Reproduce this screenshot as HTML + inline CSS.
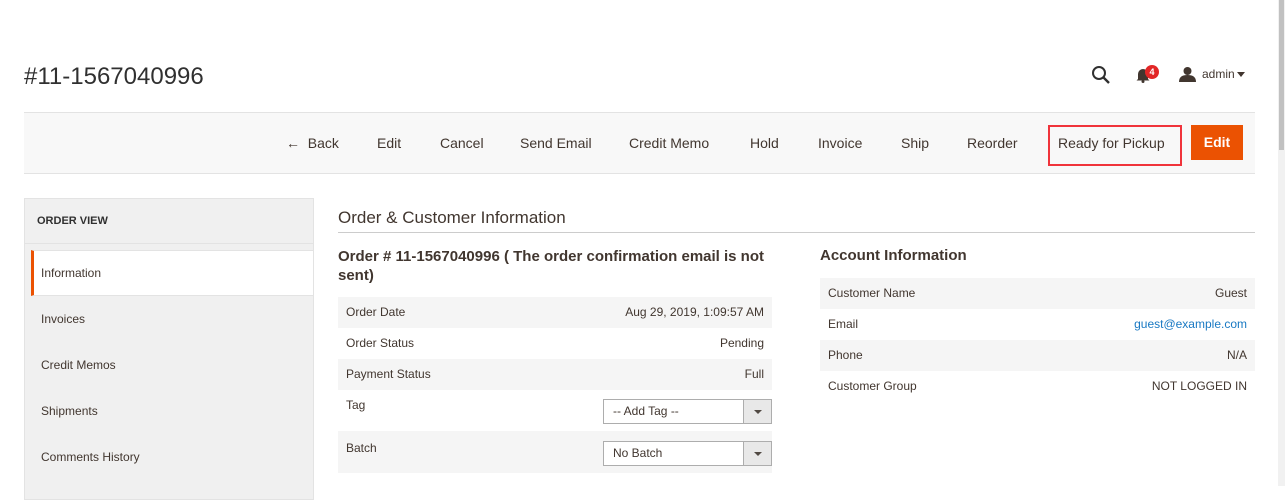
<!DOCTYPE html>
<html><head><style>
body{margin:0;width:1285px;height:486px;overflow:hidden;background:#fff;font-family:"Liberation Sans",sans-serif;color:#41362f;position:relative}
.a{position:absolute}
.tb span{position:absolute;top:135px;font-size:14px;color:#41362f}
.side div{position:absolute;left:25px;width:288px;height:46px;font-size:12px;line-height:46px;box-sizing:border-box;padding-left:16px}
.row{position:absolute;height:31px;font-size:12px;line-height:31px;color:#41362f}
.row b{font-weight:normal;position:absolute;right:8px}
.row i{font-style:normal;position:absolute;left:8px}
.g{background:#f5f5f5}
.sel{position:absolute;left:603px;width:167px;height:23px;border:1px solid #adadad;background:#fff;font-size:12px;line-height:23px}
.sel span{padding-left:9px}
.sel em{position:absolute;right:0;top:0;width:27px;height:23px;background:#e8e8e8;border-left:1px solid #adadad}
.sel em:after{content:"";position:absolute;left:10px;top:10px;border:4px solid transparent;border-top:4px solid #514943;border-bottom:0}
</style></head><body>
<div class="a" style="left:24px;top:63px;font-size:24px;color:#303030">#11-1567040996</div>
<svg class="a" style="left:1091px;top:65px" width="20" height="20" viewBox="0 0 20 20"><circle cx="8" cy="8" r="6" fill="none" stroke="#303030" stroke-width="2"/><path d="M12.5 12.5L18 18" stroke="#303030" stroke-width="2.4"/></svg>
<svg class="a" style="left:1136px;top:67px" width="14" height="16" viewBox="0 0 14 16"><path d="M2 12V7a5 5 0 0110 0v5l1.5 1.5h-13z" fill="#41362f"/><circle cx="7" cy="14.5" r="1.5" fill="#41362f"/></svg>
<div class="a" style="left:1145px;top:65px;width:14px;height:14px;border-radius:7px;background:#e22626;color:#fff;font-size:9px;font-weight:bold;text-align:center;line-height:14px">4</div>
<svg class="a" style="left:1179px;top:66px" width="17" height="16" viewBox="0 0 17 16"><circle cx="8.5" cy="5" r="4" fill="#41362f"/><path d="M0 16c0-5 3-7 8.5-7s8.5 2 8.5 7z" fill="#41362f"/></svg>
<div class="a" style="left:1202px;top:67px;font-size:12px;color:#41362f">admin</div>
<div class="a" style="left:1237px;top:72px;border:4px solid transparent;border-top:5px solid #41362f"></div>
<div class="a" style="left:1278px;top:0;width:7px;height:486px;background:#f1f1f1"></div>
<div class="a" style="left:1279px;top:0;width:5px;height:150px;background:#c1c1c1"></div>

<div class="a" style="left:24px;top:112px;width:1231px;height:60px;background:#f8f8f8;border-top:1px solid #e3e3e3;border-bottom:1px solid #e3e3e3"></div>
<div class="tb">
<span style="left:286px">&#8592;&nbsp; Back</span>
<span style="left:377px">Edit</span>
<span style="left:440px">Cancel</span>
<span style="left:520px">Send Email</span>
<span style="left:629px">Credit Memo</span>
<span style="left:750px">Hold</span>
<span style="left:818px">Invoice</span>
<span style="left:901px">Ship</span>
<span style="left:967px">Reorder</span>
<span style="left:1058px">Ready for Pickup</span>
</div>
<div class="a" style="left:1048px;top:125px;width:130px;height:37px;border:2px solid #f0333b"></div>
<div class="a" style="left:1191px;top:125px;width:52px;height:35px;background:#eb5202;color:#fff;font-size:14px;font-weight:bold;text-align:center;line-height:35px">Edit</div>

<div class="a" style="left:24px;top:198px;width:288px;height:300px;background:#f0f0f0;border:1px solid #e3e3e3"></div>
<div class="a" style="left:24px;top:243px;width:290px;height:1px;background:#e3e3e3"></div>
<div class="side">
<div style="top:198px;height:45px;font-weight:bold;font-size:11px;color:#303030;padding-left:12px">ORDER VIEW</div>
<div style="top:250px;left:31px;width:282px;height:46px;background:#fff;border-left:3px solid #eb5202;padding-left:7px;border-top:1px solid #e3e3e3;border-bottom:1px solid #e3e3e3;line-height:44px">Information</div>
<div style="top:296px">Invoices</div>
<div style="top:342px">Credit Memos</div>
<div style="top:388px">Shipments</div>
<div style="top:434px">Comments History</div>
</div>

<div class="a" style="left:338px;top:208px;font-size:17px;color:#41362f">Order &amp; Customer Information</div>
<div class="a" style="left:338px;top:232px;width:917px;height:1px;background:#ccc"></div>
<div class="a" style="left:338px;top:247px;width:440px;font-size:15px;font-weight:bold;line-height:19px;color:#41362f">Order # 11-1567040996 ( The order confirmation email is not sent)</div>
<div class="row g" style="left:338px;top:297px;width:434px"><i>Order Date</i><b>Aug 29, 2019, 1:09:57 AM</b></div>
<div class="row" style="left:338px;top:328px;width:434px"><i>Order Status</i><b>Pending</b></div>
<div class="row g" style="left:338px;top:359px;width:434px"><i>Payment Status</i><b>Full</b></div>
<div class="row" style="left:338px;top:390px;width:434px;height:41px;line-height:31px"><i>Tag</i></div>
<div class="row g" style="left:338px;top:431px;width:434px;height:42px;line-height:34px"><i>Batch</i></div>
<div class="sel" style="top:399px"><span>-- Add Tag --</span><em></em></div>
<div class="sel" style="top:441px"><span>No Batch</span><em></em></div>

<div class="a" style="left:820px;top:247px;font-size:15px;font-weight:bold;color:#41362f">Account Information</div>
<div class="row g" style="left:820px;top:278px;width:435px"><i>Customer Name</i><b>Guest</b></div>
<div class="row" style="left:820px;top:309px;width:435px"><i>Email</i><b style="color:#1979c3">guest@example.com</b></div>
<div class="row g" style="left:820px;top:340px;width:435px"><i>Phone</i><b>N/A</b></div>
<div class="row" style="left:820px;top:371px;width:435px"><i>Customer Group</i><b>NOT LOGGED IN</b></div>
</body></html>
